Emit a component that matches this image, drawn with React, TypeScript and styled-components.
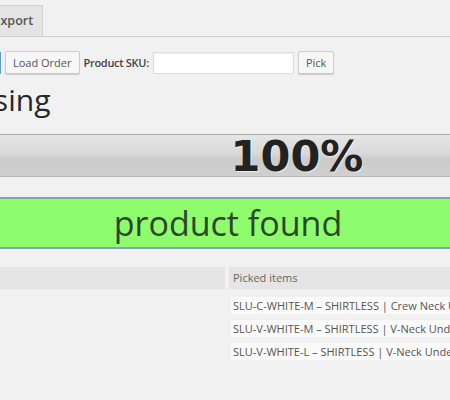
import styled, { createGlobalStyle } from "styled-components";

const GlobalStyle = createGlobalStyle`
  html, body {
    margin: 0;
    padding: 0;
    background: #f1f1f1;
    overflow: hidden;
  }
  body {
    font-family: "Open Sans", "Liberation Sans", sans-serif;
    color: #444;
  }
`;

const pickedItems = [
  "SLU-C-WHITE-M – SHIRTLESS | Crew Neck Undershirt – White – M",
  "SLU-V-WHITE-M – SHIRTLESS | V-Neck Undershirt – White – M",
  "SLU-V-WHITE-L – SHIRTLESS | V-Neck Undershirt – White – L",
];

// the shot is cropped from a wider admin page, so the content starts off-screen
const Page = styled.div`
  width: 1000px;
  margin-left: -100px;
`;

const TabBar = styled.div`
  display: flex;
  gap: 6px;
  padding: 5px 0 0 16px;
  border-bottom: 1px solid #ccc;
`;

const Tab = styled.div`
  padding: 0 9px 0 9px;
  height: 30px;
  line-height: 30px;
  font-size: 12.5px;
  font-weight: 600;
  color: #555;
  background: #e4e4e4;
  border: 1px solid #d4d4d4;
  border-bottom: none;
`;

const Toolbar = styled.div`
  display: flex;
  align-items: center;
  gap: 4px;
  margin-top: 14px;
`;

const Field = styled.div<{ $width: number; $focused?: boolean }>`
  width: ${({ $width }) => $width}px;
  height: 20px;
  background: #fff;
  border: 1px solid ${({ $focused }) => ($focused ? "#5b9dd9" : "#ddd")};
  box-shadow: inset 0 1px 2px rgba(0, 0, 0, 0.07);
`;

const Button = styled.div`
  height: 21px;
  line-height: 21px;
  padding: 0 7px;
  font-size: 11px;
  color: #555;
  background: #f7f7f7;
  border: 1px solid #ccc;
  border-radius: 2px;
  box-shadow: 0 1px 0 #ccc;
`;

const Label = styled.span`
  font-size: 11px;
  font-weight: 600;
  letter-spacing: -0.3px;
  color: #444;
`;

const Heading = styled.h1`
  margin: 3px 0 0;
  font-size: 30px;
  font-weight: 400;
  line-height: 45px;
  color: #23282d;
`;

const Progress = styled.div`
  width: 794px;
  height: 41px;
  margin-top: 12px;
  line-height: 42px;
  text-align: center;
  font-family: "DejaVu Sans", sans-serif;
  font-size: 43px;
  font-weight: 700;
  color: #222;
  text-shadow: 1px 1px 0 rgba(255, 255, 255, 0.6);
  background: linear-gradient(#e6e6e6, #d8d8d8 45%, #cbcbcb 60%, #d0d0d0);
  border-top: 1px solid #aaa;
  border-bottom: 1px solid #b8b8b8;
`;

const Notice = styled.div`
  width: 656px;
  height: 48px;
  margin-top: 20px;
  line-height: 48px;
  text-align: center;
  font-size: 34px;
  color: #2d462d;
  background: #8efc6c;
  border-top: 2px solid #7ba7b5;
  border-bottom: 2px solid #7ba7b5;
`;

const Columns = styled.div`
  display: flex;
  gap: 4px;
  margin-top: 18px;
`;

const Column = styled.div<{ $width: number }>`
  width: ${({ $width }) => $width}px;
  display: flex;
  flex-direction: column;
  gap: 6px;
`;

const TableHead = styled.div`
  height: 22px;
  line-height: 22px;
  padding: 0 4px;
  margin-bottom: 2px;
  font-size: 11px;
  color: #666;
  background: #e5e5e5;
  white-space: nowrap;
  overflow: hidden;
`;

const Row = styled.div`
  height: 17px;
  line-height: 17px;
  margin-left: 2px;
  padding: 0 2px;
  font-size: 11px;
  color: #555;
  background: #fafafa;
  white-space: nowrap;
`;

const App = () => {
  return (
    <>
      <GlobalStyle />
      <Page>
        <TabBar>
          <Tab>Import</Tab>
          <Tab>Export</Tab>
        </TabBar>

        <Toolbar>
          <Field $width={99} $focused />
          <Button>Load Order</Button>
          <Label>Product SKU:</Label>
          <Field $width={139} />
          <Button>Pick</Button>
        </Toolbar>

        <Heading>Processing</Heading>

        <Progress>100%</Progress>

        <Notice>product found</Notice>

        <Columns>
          <Column $width={325}>
            <TableHead>Items</TableHead>
          </Column>
          <Column $width={560}>
            <TableHead>Picked items</TableHead>
            {pickedItems.map((item) => (
              <Row key={item}>{item}</Row>
            ))}
          </Column>
        </Columns>
      </Page>
    </>
  );
};

export default App;
